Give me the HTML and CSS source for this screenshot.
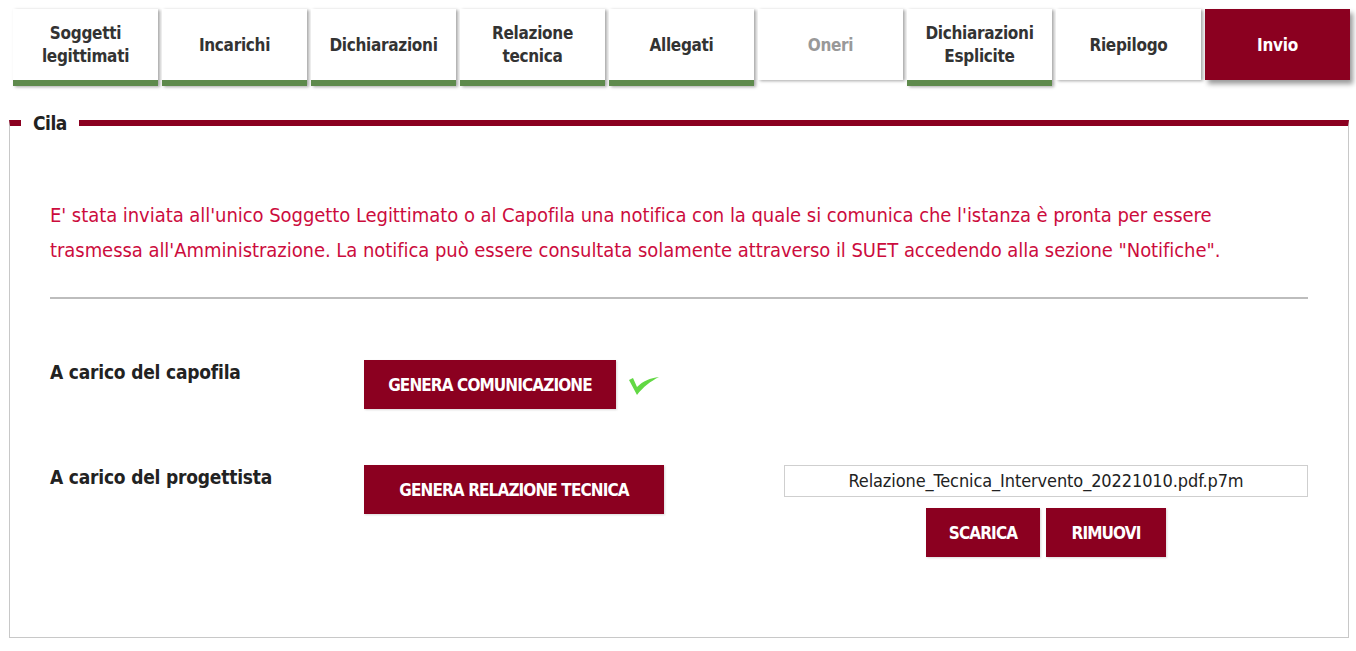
FILE: index.html
```html
<!DOCTYPE html>
<html lang="it">
<head>
<meta charset="utf-8">
<title>Cila - Invio</title>
<link rel="stylesheet" href="styles.css">
</head>
<body>
<nav class="tabs">
  <div class="tab done">Soggetti<br>legittimati</div>
  <div class="tab done">Incarichi</div>
  <div class="tab done">Dichiarazioni</div>
  <div class="tab done">Relazione<br>tecnica</div>
  <div class="tab done">Allegati</div>
  <div class="tab disabled">Oneri</div>
  <div class="tab done">Dichiarazioni<br>Esplicite</div>
  <div class="tab">Riepilogo</div>
  <div class="tab active">Invio</div>
</nav>

<fieldset class="panel">
  <legend class="panel-title">Cila</legend>
  <div class="panel-body">
    <p class="notice">E' stata inviata all'unico Soggetto Legittimato o al Capofila una notifica con la quale si comunica che l'istanza è pronta per essere trasmessa all'Amministrazione. La notifica può essere consultata solamente attraverso il SUET accedendo alla sezione "Notifiche".</p>
    <hr class="sep">
    <div class="row">
      <div class="label">A carico del capofila</div>
      <div class="actions">
        <button class="btn btn-wide1">GENERA COMUNICAZIONE</button>
        <svg class="check" width="32" height="22" viewBox="0 0 32 22">
          <path d="M1 6 L5 4 L9 13 C15 7 22 4 31 3 C23 7 15 13 9 21 Z" fill="#62d844"/>
        </svg>
      </div>
    </div>
    <div class="row">
      <div class="label">A carico del progettista</div>
      <div class="actions">
        <button class="btn btn-wide2">GENERA RELAZIONE TECNICA</button>
      </div>
      <div class="file">
        <div class="file-name">Relazione_Tecnica_Intervento_20221010.pdf.p7m</div>
        <div class="file-buttons">
          <button class="btn btn-small">SCARICA</button>
          <button class="btn btn-small">RIMUOVI</button>
        </div>
      </div>
    </div>
  </div>
</fieldset>
</body>
</html>
```

FILE: styles.css
```css
html, body {
  margin: 0;
  padding: 0;
  background: #ffffff;
}

body {
  font-family: "DejaVu Sans Condensed", "Liberation Sans", sans-serif;
  color: #222;
}

.tabs {
  display: flex;
  gap: 4px;
  padding: 9px 0 0 13px;
}

.tab {
  width: 145px;
  height: 71px;
  box-sizing: border-box;
  display: flex;
  align-items: center;
  justify-content: center;
  text-align: center;
  font-weight: bold;
  font-size: 17px;
  letter-spacing: -0.3px;
  line-height: 23px;
  color: #333;
  background: #fff;
  box-shadow: 2px 1px 3px rgba(0, 0, 0, 0.35);
  padding-top: 1px;
}

.tab.done {
  height: 77px;
  border-bottom: 6px solid #5e8a4c;
}

.tab.disabled {
  color: #999;
}

.tab.active {
  background: #8b0020;
  color: #fff;
  box-shadow: 3px 4px 5px rgba(0, 0, 0, 0.4);
}

.panel {
  margin: 25px 7px 0 9px;
  padding: 0;
  border: 1px solid #c8c8c8;
  border-top: 6px solid #8b0020;
  min-width: 0;
}

.panel-title {
  margin-left: 11px;
  padding: 0 12px;
  font-size: 19px;
  letter-spacing: -0.5px;
  line-height: 24px;
  font-weight: bold;
  color: #222;
  background: #fff;
}

.panel-body {
  padding: 63px 40px 80px 40px;
}

.notice {
  margin: 0;
  font-size: 20px;
  letter-spacing: -0.05px;
  line-height: 35px;
  color: #cc0c3d;
}

.sep {
  margin: 29px 0 0 0;
  border: 0;
  height: 2px;
  background: #bdbdbd;
}

.row {
  display: flex;
  align-items: flex-start;
  margin-top: 61px;
}

.row + .row {
  margin-top: 56px;
}

.label {
  width: 314px;
  flex: none;
  font-size: 19px;
  letter-spacing: -0.2px;
  font-weight: bold;
  line-height: 24px;
  color: #222;
}

.actions {
  display: flex;
  align-items: center;
  gap: 12px;
  flex: none;
}

.btn {
  height: 49px;
  border: 0;
  background: #8b0020;
  color: #fff;
  font-family: inherit;
  font-weight: bold;
  font-size: 17px;
  letter-spacing: -0.9px;
  padding: 0;
  cursor: pointer;
  box-shadow: 1px 1px 2px rgba(0, 0, 0, 0.15);
}

.btn-wide1 {
  width: 252px;
}

.btn-wide2 {
  width: 300px;
}

.btn-small {
  width: 114px;
}

.btn-small + .btn-small {
  width: 120px;
}

.check {
  display: block;
}

.file {
  margin-left: 120px;
  width: 524px;
  display: flex;
  flex-direction: column;
  align-items: center;
}

.file-name {
  width: 100%;
  box-sizing: border-box;
  height: 32px;
  border: 1px solid #cfcfcf;
  text-align: center;
  font-size: 18px;
  letter-spacing: -0.1px;
  line-height: 30px;
  color: #222;
}

.file-buttons {
  display: flex;
  gap: 6px;
  margin-top: 11px;
}
```
